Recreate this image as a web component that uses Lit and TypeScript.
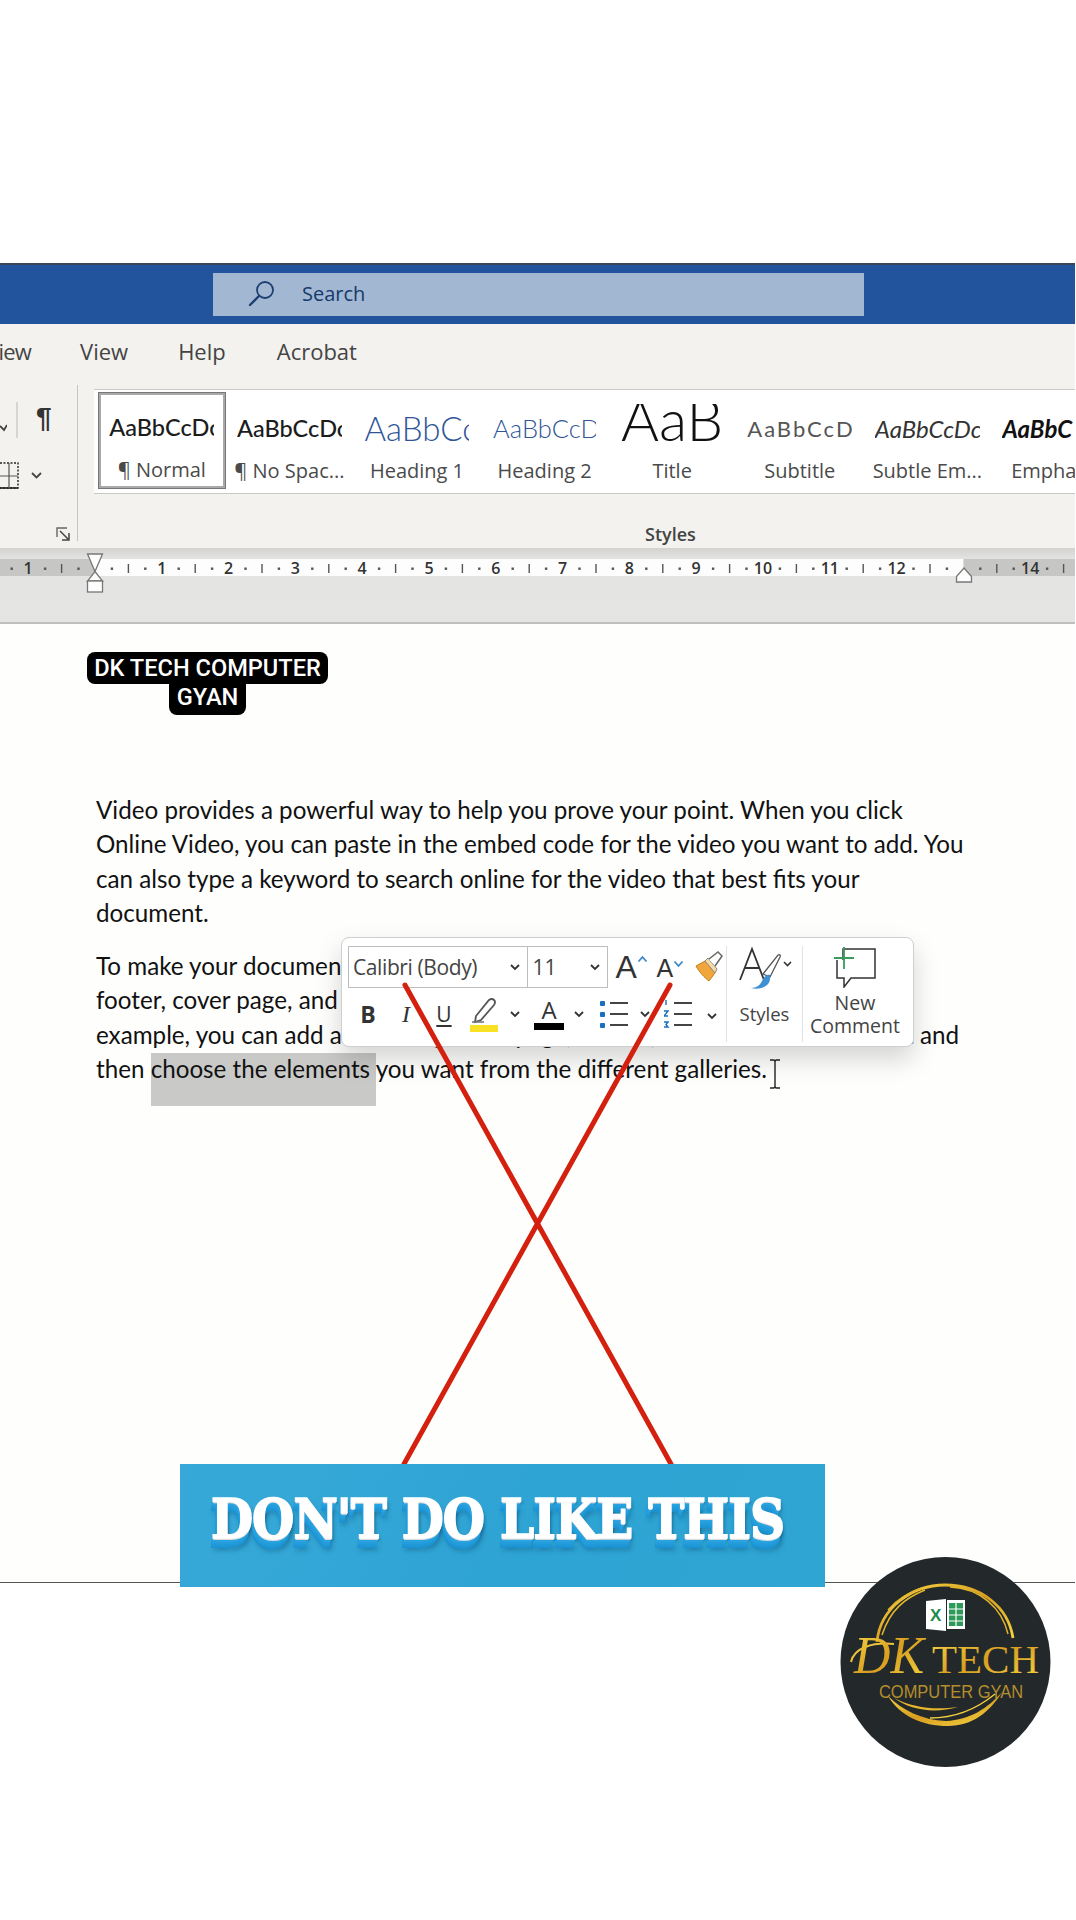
import { LitElement, html, css, svg } from "lit";
import { customElement } from "lit/decorators.js";

const chev = html`<svg class="chev" viewBox="0 0 12 8"><path d="M2 2l4 4 4-4" fill="none" stroke="#333" stroke-width="1.8"/></svg>`;

const gallery = [
  { p: "AaBbCcDc", l: "¶ Normal", c: "pv-normal sel-box" },
  { p: "AaBbCcDc", l: "¶ No Spac...", c: "pv-normal" },
  { p: "AaBbCc", l: "Heading 1", c: "pv-h1" },
  { p: "AaBbCcD", l: "Heading 2", c: "pv-h2" },
  { p: "AaB", l: "Title", c: "pv-title" },
  { p: "AaBbCcD", l: "Subtitle", c: "pv-sub" },
  { p: "AaBbCcDc", l: "Subtle Em...", c: "pv-em" },
  { p: "AaBbC", l: "Empha", c: "pv-emph" },
];

const ZERO = 95;
const INCH = 66.8;

function rulerMarks() {
  const out: unknown[] = [];
  for (let i = -2; i <= 15; i++) {
    const x = ZERO + i * INCH;
    if (i !== 0 && i !== 13 && i !== -2) {
      out.push(svg`<text x="${x}" y="26" class="rn">${Math.abs(i)}</text>`);
    }
    out.push(svg`<rect x="${x + INCH / 4 - 1}" y="19.5" width="2.4" height="2.4" fill="#555"/>`);
    out.push(svg`<rect x="${x + INCH / 2 - 0.7}" y="16" width="1.4" height="9" fill="#555"/>`);
    out.push(svg`<rect x="${x + (3 * INCH) / 4 - 1}" y="19.5" width="2.4" height="2.4" fill="#555"/>`);
  }
  return out;
}

@customElement("app-root")
export class AppRoot extends LitElement {
  static styles = css`
    :host {
      display: block;
      position: relative;
      width: 1076px;
      height: 1920px;
      background: #fff;
      overflow: hidden;
      font-family: "Open Sans", sans-serif;
    }
    .top { height: 263px; }
    .window { width: 1075px; overflow: hidden; }
    .title {
      height: 61px;
      box-sizing: border-box;
      border-top: 2px solid #3b4658;
      background: #21549c;
      padding: 8px 0 8px 213px;
    }
    .search {
      width: 651px;
      height: 43px;
      background: #a2b8d2;
      display: flex;
      align-items: center;
      padding: 0 0 2px 35px;
      box-sizing: border-box;
      gap: 27px;
      color: #17396b;
      font-size: 20px;
    }
    .search svg { width: 27px; height: 27px; }
    .tabs {
      height: 58px;
      box-sizing: border-box;
      padding-bottom: 5px;
      background: #f3f2ee;
      display: flex;
      align-items: center;
      font-size: 22px;
      color: #444;
      overflow: hidden;
    }
    .tabs span:nth-child(1) { margin-left: -1.5px; margin-right: 49px; letter-spacing: -0.8px; }
    .tabs span:nth-child(2) { margin-right: 50px; }
    .tabs span:nth-child(3) { margin-right: 51px; }
    .ribbon {
      height: 166px;
      background: #f3f2ee;
      display: grid;
      grid-template-columns: 77px 1px 1fr;
      position: relative;
    }
    .left { position: relative; }
    .vrule { background: #c4c4c0; margin-top: 3px; height: 156px; }
    .pil {
      position: absolute;
      left: 36px;
      top: 20px;
      font-size: 28px;
      font-weight: 700;
      color: #333;
      font-family: "Liberation Sans", sans-serif;
    }
    .left svg { position: absolute; }
    .ic-v { left: 0; top: 39px; width: 7px; height: 12px; }
    .ic-sep { left: 16px; top: 20px; width: 2px; height: 36px; }
    .ic-border { left: 0; top: 80px; width: 19px; height: 27px; }
    .ic-chev { left: 30px; top: 89px; width: 13px; height: 9px; }
    .ic-launch { left: 56px; top: 145px; width: 15px; height: 15px; }
    .styles { display: flex; flex-direction: column; padding: 7px 0 0 16px; }
    .gallery {
      height: 105px;
      box-sizing: border-box;
      background: #fff;
      border-top: 1.5px solid #c9c9c6;
      border-bottom: 1.5px solid #c9c9c6;
      display: flex;
      padding: 2px 0 0 4px;
      overflow: hidden;
      width: 981px;
    }
    .item {
      flex: 0 0 127.6px;
      box-sizing: border-box;
      height: 98px;
      padding-top: 8px;
      display: flex;
      flex-direction: column;
      align-items: center;
      overflow: hidden;
    }
    .pv {
      height: 56px;
      width: 105px;
      overflow: hidden;
      white-space: nowrap;
      display: flex;
      align-items: center;
      font-family: Lato, sans-serif;
      color: #1c1c1c;
      justify-content: flex-start;
      flex: none;
    }
    .lab {
      font-size: 20px;
      color: #4a4a4a;
      line-height: 28px;
      margin-top: 1px;
      white-space: nowrap;
    }
    .sel-box { border: 3px solid #a9a9a9; outline: 1px solid #777; outline-offset: -1px; padding-top: 7px; height: 97px; }
    .sel-box .pv { height: 50px; }
    .sel-box .lab { margin-top: 4px; }
    .pv-normal .pv { font-size: 23.5px; font-weight: 500; }
    .pv-h1 .pv { font-size: 33px; color: #2f5597; font-weight: 300; }
    .pv-h2 .pv { font-size: 25.5px; color: #2f5597; font-weight: 300; width: 103px; }
    .pv-title { padding-top: 11.5px; }
    .pv-title .pv { font-size: 58px; font-weight: 300; color: #111; line-height: 58px; align-items: flex-start; justify-content: center; height: 52.5px; }
    .pv-title .pv span { display: block; margin-top: -14px; }
    .pv-sub .pv { font-size: 22px; color: #555; letter-spacing: 2px; }
    .pv-em .pv { font-size: 24px; font-style: italic; color: #333; }
    .pv-emph .pv { font-size: 24px; font-style: italic; font-weight: 700; color: #111; align-self: flex-start; margin-left: 11px; }
    .pv-emph .lab { align-self: flex-start; margin-left: 20px; }
    .grp {
      font-size: 18px;
      color: #444;
      line-height: 26px;
      margin-top: 27px;
      font-weight: 600;
      padding-left: 551px;
    }
    .rulerband {
      height: 76px;
      box-sizing: border-box;
      border-bottom: 2px solid #bfbfbd;
      background: linear-gradient(#d3d4d1 0, #e3e4e2 11px, #e5e6e4 100%);
    }
    .rulerband svg { display: block; width: 1075px; height: 75px; }
    .rn { font: 600 16px "Open Sans", sans-serif; fill: #333; text-anchor: middle; }
    .doc {
      height: 959px;
      box-sizing: border-box;
      background: #fefefd;
      border-bottom: 1.5px solid #555;
      padding: 169px 0 0 96px;
      font-family: Lato, sans-serif;
      font-size: 24.2px;
      line-height: 34.3px;
      color: #111;
      isolation: isolate;
    }
    .doc p { margin: 0 0 19px; width: 869px; }
    .sel { position: relative; }
    .sel::before {
      content: "";
      position: absolute;
      left: 0;
      right: 0;
      top: -1px;
      height: 53px;
      background: #c9c9c8;
      z-index: -1;
    }
    .ibeam { position: absolute; left: 768px; top: 1059px; width: 14px; height: 30px; }

    .caption {
      position: absolute;
      left: 87px;
      top: 652px;
      width: 241px;
      display: flex;
      flex-direction: column;
      align-items: center;
      font: 500 23.6px Roboto, sans-serif;
      color: #fff;
    }
    .caption div { background: #000; white-space: nowrap; text-align: center; }
    .cap1 { width: 241px; border-radius: 8px; height: 32px; line-height: 32px; }
    .cap2 { width: 77px; border-radius: 0 0 8px 8px; line-height: 26px; height: 31px; }

    .mini {
      position: absolute;
      left: 341px;
      top: 937px;
      width: 573px;
      height: 110px;
      box-sizing: border-box;
      background: #fff;
      border: 1.5px solid #cfcfcf;
      border-radius: 8px;
      box-shadow: 0 12px 26px rgba(0, 0, 0, 0.17);
      display: grid;
      grid-template-columns: 384px 1px 75px 1px 1fr;
      padding-top: 8px;
      color: #333;
    }
    .fmt { padding-left: 6px; display: flex; flex-direction: column; }
    .r1 { display: flex; align-items: center; height: 42px; }
    .fbox {
      height: 42px;
      box-sizing: border-box;
      border: 1.5px solid #bdbdbd;
      display: flex;
      align-items: center;
      font-size: 21px;
      color: #444;
      padding: 0 6px;
      justify-content: space-between;
    }
    .fname { width: 180px; letter-spacing: -0.4px; padding-left: 4px; }
    .fsize { width: 81px; margin-left: -1.5px; padding-left: 5px; }
    .chev { width: 12px; height: 8px; flex: none; }
    .gs { font: 400 32px "Liberation Sans", sans-serif; color: #333; display: flex; align-items: flex-start; }
    .gs svg { width: 11px; height: 8px; margin-top: 6px; }
    .g1 { margin-left: 8px; width: 39px; }
    .g2 { margin-left: 2px; width: 34px; font-size: 25px; padding-top: 2px; box-sizing: border-box; }
    .brush { width: 30px; height: 32px; margin-left: 2px; }
    .r2 { display: flex; align-items: center; height: 46px; margin-top: 3px; }
    .b { width: 38px; text-align: center; font-size: 22px; color: #333; flex: none; }
    .b-b { font: 700 23px "Open Sans", sans-serif; margin-left: 1px; }
    .b-i { font: italic 400 24px "Liberation Serif", serif; }
    .b-u { text-decoration: underline; text-underline-offset: 3px; font-size: 21px; text-decoration-thickness: 1.5px; }
    .r2 svg.ci { flex: none; }
    .hl { width: 30px; height: 36px; margin-left: 7px; }
    .fa { width: 30px; height: 36px; margin-left: 13px; text-align: center; flex: none; }
    .fa span { display: block; font-size: 24px; line-height: 27px; color: #333; }
    .fa i { display: block; height: 7px; background: #000; }
    .m10 { margin-left: 9px; display: flex; }
    .list { width: 30px; height: 30px; margin-left: 15px; }
    .list2 { margin-left: 13px; }
    .m13 { margin-left: 12px; }
    .vsep { background: #e2e2e2; margin: 0 0 4px; }
    .stylesbtn { display: flex; flex-direction: column; align-items: center; font-size: 18.5px; color: #444; }
    .stylesbtn svg.big { width: 56px; height: 44px; }
    .stylesbtn span { margin-top: 12px; line-height: 24px; }
    .cbtn { display: flex; flex-direction: column; align-items: center; font-size: 19.5px; line-height: 23px; color: #444; text-align: center; padding-right: 6px; }
    .cbtn svg { width: 44px; height: 42px; margin-bottom: 3px; }

    .xlines { position: absolute; left: 0; top: 0; width: 1076px; height: 1920px; pointer-events: none; }
    .banner {
      position: absolute;
      left: 180px;
      top: 1464px;
      width: 645px;
      height: 123px;
      background: linear-gradient(120deg, #37a9d8, #2ea4d4 55%, #2fa5d3);
      display: flex;
      align-items: center;
      justify-content: center;
      padding: 0 10px 14px 0;
      box-sizing: border-box;
      color: #fff;
      font: 700 54px "DejaVu Serif", serif;
      font-stretch: condensed;
      -webkit-text-stroke: 1.5px #fff;
      letter-spacing: -1px;
      white-space: nowrap;
      text-shadow:
        0 1px 0 #e4e4e4, 0 2px 0 #dcdcdc,
        -1px 3px 0 #29a3e0, -1px 4px 0 #29a3e0, -2px 5px 0 #259ddc, -2px 6px 0 #259ddc,
        -2px 7px 0 #2099d8, -2px 8px 0 #2099d8, -2px 9px 0 #1c93d2, -2px 10px 0 #1c93d2,
        0 12px 5px rgba(10, 70, 110, 0.45), 2px 3px 3px rgba(10, 70, 110, 0.4);
    }
    .logo { position: absolute; left: 830px; top: 1540px; width: 230px; height: 230px; }
    .lg-dk { font: italic 400 52px "Liberation Serif", serif; }
    .lg-tech { font: 400 41px "Liberation Serif", serif; }
    .lg-sub { font: 400 17.5px "Liberation Sans", sans-serif; }
    .lg-x { font: 700 17px "Liberation Sans", sans-serif; }
  `;

  render() {
    return html`
      <div class="top"></div>
      <div class="window">
        <div class="title">
          <div class="search">
            <svg viewBox="0 0 27 27"><circle cx="17" cy="10" r="8" fill="none" stroke="#1d3f72" stroke-width="1.8"/><path d="M11 16L2 25" stroke="#1d3f72" stroke-width="2.4" stroke-linecap="round"/></svg>
            <span>Search</span>
          </div>
        </div>
        <div class="tabs"><span>iew</span><span>View</span><span>Help</span><span>Acrobat</span></div>
        <div class="ribbon">
          <div class="left">
            <svg class="ic-v" viewBox="0 0 7 12"><path d="M0 5l4 4 3-5" fill="none" stroke="#444" stroke-width="1.8"/></svg>
            <svg class="ic-sep" viewBox="0 0 2 36"><rect width="2" height="36" fill="#d6d6d2"/></svg>
            <div class="pil">¶</div>
            <svg class="ic-border" viewBox="0 0 19 27"><path d="M0 1h18v25H0" fill="none" stroke="#222" stroke-width="1.4" stroke-dasharray="2 1.5"/><path d="M0 26h18" stroke="#222" stroke-width="1.6"/><path d="M9 1v25M0 14h18" stroke="#555" stroke-width="1.2"/></svg>
            <svg class="ic-chev" viewBox="0 0 13 9"><path d="M2 2l4.5 4.5L11 2" fill="none" stroke="#444" stroke-width="1.8"/></svg>
            <svg class="ic-launch" viewBox="0 0 15 15"><path d="M1 10V1h10" fill="none" stroke="#666" stroke-width="1.4"/><path d="M4 4l8 8M13 6v7H6" fill="none" stroke="#444" stroke-width="1.5"/></svg>
          </div>
          <div class="vrule"></div>
          <div class="styles">
            <div class="gallery">
              ${gallery.map(
                (g) => html`<div class="item ${g.c}">
                  <div class="pv"><span>${g.p}</span></div>
                  <div class="lab">${g.l}</div>
                </div>`
              )}
            </div>
            <div class="grp">Styles</div>
          </div>
        </div>
        <div class="rulerband">
          <svg viewBox="0 0 1075 75">
            <rect x="0" y="11" width="1075" height="17" fill="#c6c7c5"/>
            <rect x="${ZERO}" y="11" width="${13 * INCH}" height="17" fill="#fdfdfd"/>
            ${rulerMarks()}
            <path d="M87.5 6h15L95 23.5z" fill="#fdfdfd" stroke="#777" stroke-width="1.3"/>
            <path d="M95 23.5L102.5 33h-15z" fill="#fdfdfd" stroke="#777" stroke-width="1.3"/>
            <rect x="87.5" y="33" width="15" height="11" fill="#fdfdfd" stroke="#777" stroke-width="1.3"/>
            <path d="M964 20l7.5 8.5v5.5h-15v-5.5z" fill="#fdfdfd" stroke="#777" stroke-width="1.3"/>
          </svg>
        </div>
        <div class="doc">
          <p>Video provides a powerful way to help you prove your point. When you click Online Video, you can paste in the embed code for the video you want to add. You can also type a keyword to search online for the video that best fits your document.</p>
          <p>To make your document look professionally produced, Word provides header, footer, cover page, and text box designs that complement each other. For example, you can add a matching cover page, header, and sidebar. Click Insert and then <span class="sel">choose the elements </span>you want from the different galleries.</p>
        </div>
      </div>

      <svg class="ibeam" viewBox="0 0 14 30"><path d="M2 1h3.5q1.5 0 1.5 2v24q0 2-1.5 2H2M12 1H8.5q-1.5 0-1.5 2v24q0 2 1.5 2H12" fill="none" stroke="#222" stroke-width="1.4"/></svg>

      <div class="caption"><div class="cap1">DK TECH COMPUTER</div><div class="cap2">GYAN</div></div>

      <div class="mini">
        <div class="fmt">
          <div class="r1">
            <div class="fbox fname"><span>Calibri (Body)</span>${chev}</div>
            <div class="fbox fsize"><span>11</span>${chev}</div>
            <div class="gs g1">A<svg viewBox="0 0 11 8"><path d="M1.5 6.5L5.5 2l4 4.5" fill="none" stroke="#3b87c9" stroke-width="1.8"/></svg></div>
            <div class="gs g2">A<svg viewBox="0 0 11 8"><path d="M1.5 1.5L5.5 6l4-4.5" fill="none" stroke="#3b87c9" stroke-width="1.8"/></svg></div>
            <svg class="brush ci" viewBox="0 0 30 32"><path d="M3 15l9-5 10 12-6 8c-4-3-10-9-13-15z" fill="#f0a63a" stroke="#c47f1e" stroke-width="1"/><path d="M12 10l3-3 9 11-2 4z" fill="#f7d9a4" stroke="#8a8a8a" stroke-width="1"/><path d="M16 8l9-7 4 4-7 10" fill="#fff" stroke="#666" stroke-width="1.5"/></svg>
          </div>
          <div class="r2">
            <div class="b b-b">B</div>
            <div class="b b-i">I</div>
            <div class="b b-u">U</div>
            <svg class="hl ci" viewBox="0 0 30 36"><path d="M6 20L19 4q3-2 5 0t0 5L11 24l-6 2z" fill="none" stroke="#555" stroke-width="1.8"/><path d="M2 26h12" stroke="#777" stroke-width="1.6"/><rect x="0" y="29" width="28" height="7" fill="#f9e224"/></svg>
            <span class="m10">${chev}</span>
            <div class="fa"><span>A</span><i></i></div>
            <span class="m10">${chev}</span>
            <svg class="list ci" viewBox="0 0 30 30"><rect x="0" y="2" width="5" height="5" rx="1" fill="#1b6fc2"/><rect x="0" y="13" width="5" height="5" rx="1" fill="#1b6fc2"/><rect x="0" y="24" width="5" height="5" rx="1" fill="#1b6fc2"/><path d="M10 4h18M10 15h18M10 26h18" stroke="#444" stroke-width="1.8"/></svg>
            <span class="m10">${chev}</span>
            <svg class="list list2 ci" viewBox="0 0 30 30"><path d="M2 1v5M0 12h4l-4 5h4M0 23h4l-2 2.5 2 2.5H0" fill="none" stroke="#1b6fc2" stroke-width="1.4"/><path d="M10 4h18M10 15h18M10 26h18" stroke="#444" stroke-width="1.8"/></svg>
            <span class="m13">${chev}</span>
          </div>
        </div>
        <div class="vsep"></div>
        <div class="stylesbtn">
          <svg class="big" viewBox="0 0 56 44"><path d="M3 34L15 3l12 31M8 22h14" fill="none" stroke="#333" stroke-width="1.8"/><path d="M26 28L41 9q3-1 2 2L33 31z" fill="#fff" stroke="#555" stroke-width="1.3"/><path d="M14 42c6 0 9-3 11-7s5-7 8-6q1 9-6 12c-4 2-9 2-13 1z" fill="#3f8fd4"/><path d="M47 16l3.5 3.5L54 16" fill="none" stroke="#333" stroke-width="1.6"/></svg>
          <span>Styles</span>
        </div>
        <div class="vsep"></div>
        <div class="cbtn">
          <svg viewBox="0 0 44 42"><path d="M10 14V3h32v29H18l-7 9v-9H4V14" fill="none" stroke="#333" stroke-width="1.5"/><path d="M11 1v22M1 12h20" stroke="#3a9a5c" stroke-width="1.8"/></svg>
          <span>New<br />Comment</span>
        </div>
      </div>

      <svg class="xlines" viewBox="0 0 1076 1920">
        <path d="M405 985L671 1464M670 985L404 1464" stroke="#d4200e" stroke-width="5" fill="none" stroke-linecap="round"/>
      </svg>

      <div class="banner">DON'T DO LIKE THIS</div>

      <svg class="logo" viewBox="0 0 230 230">
        <defs>
          <linearGradient id="g" x1="0" y1="0" x2="1" y2="1">
            <stop offset="0" stop-color="#f7d848"/>
            <stop offset="0.5" stop-color="#d89e20"/>
            <stop offset="1" stop-color="#f6d645"/>
          </linearGradient>
        </defs>
        <circle cx="115.5" cy="122" r="105" fill="#23292a"/>
        <path d="M47 102C50 68 82 45 115 45C150 45 178 66 183 98" fill="none" stroke="url(#g)" stroke-width="2.8"/>
        <path d="M52 95C60 70 75 58 95 50M58 70C68 58 80 52 92 48" fill="none" stroke="#e5b52c" stroke-width="1.5"/>
        <path d="M120 47C150 48 172 68 178 94" fill="none" stroke="#e5b52c" stroke-width="1.4"/>
        <path d="M96 61L116 59V91L96 89z" fill="#fff"/>
        <rect x="117" y="60" width="18" height="29" fill="#fff"/>
        <path d="M119 63h14v23h-14z" fill="#2d9a5a"/>
        <path d="M119 69h14M119 75h14M119 81h14M126 63v23" stroke="#fff" stroke-width="1.2"/>
        <text class="lg-x" x="100" y="81" fill="#1f8a4f">X</text>
        <path d="M21 122C24 108 42 102 64 104" fill="none" stroke="#eec23a" stroke-width="2"/>
        <text class="lg-dk" x="24" y="133" fill="url(#g)" textLength="70" lengthAdjust="spacingAndGlyphs">DK</text>
        <text class="lg-tech" x="102" y="133" fill="url(#g)" textLength="107" lengthAdjust="spacingAndGlyphs">TECH</text>
        <text class="lg-sub" x="49" y="158" fill="#b48d2e" textLength="144" lengthAdjust="spacingAndGlyphs">COMPUTER GYAN</text>
        <path d="M58 156C70 176 92 186 118 186C142 186 160 172 172 152C158 168 140 180 116 181C92 180 72 170 58 156z" fill="url(#g)"/>
        <path d="M64 158C80 170 104 174 128 167C104 170 84 168 64 158z" fill="#e5b52c"/>
        <path d="M100 178C125 178 148 168 165 154" fill="none" stroke="#f3cf3f" stroke-width="1.3"/>
      </svg>
    `;
  }
}
